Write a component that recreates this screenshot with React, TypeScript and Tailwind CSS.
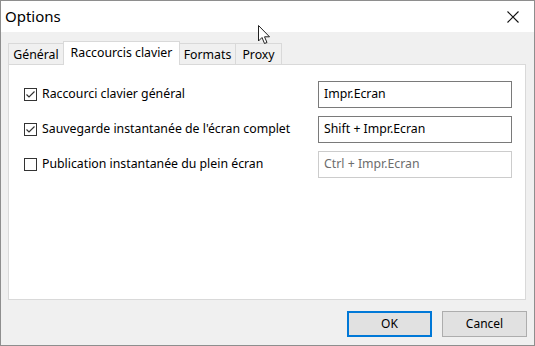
import { useState } from 'react';

const FONT = "font-['Noto_Sans','Open_Sans',sans-serif]";

function CheckBox({ checked, onClick }: { checked: boolean; onClick: () => void }) {
  return (
    <button
      type="button"
      role="checkbox"
      aria-checked={checked}
      onClick={onClick}
      className="flex h-[13px] w-[13px] shrink-0 items-center justify-center border border-[#333333] bg-white"
    >
      {checked && (
        <svg width="11" height="11" viewBox="0 0 11 11" fill="none">
          <path d="M1.5 5.5 L4 8 L9.5 2.5" stroke="#333333" strokeWidth="1.2" />
        </svg>
      )}
    </button>
  );
}

const shortcuts = [
  { label: 'Raccourci clavier général', key: 'Impr.Ecran', on: true },
  { label: "Sauvegarde instantanée de l'écran complet", key: 'Shift + Impr.Ecran', on: true },
  { label: 'Publication instantanée du plein écran', key: 'Ctrl + Impr.Ecran', on: false },
];

const tabs = [
  { name: 'Général', w: 'w-[56px]' },
  { name: 'Raccourcis clavier', w: 'w-[117px]' },
  { name: 'Formats', w: 'w-[57px]' },
  { name: 'Proxy', w: 'w-[47px]' },
];

export default function App() {
  const [checked, setChecked] = useState(shortcuts.map((s) => s.on));
  const active = 1;

  return (
    <div className={`relative flex h-[346px] w-[535px] flex-col border border-[#8e8e8e] bg-[#f0f0f0] text-[12px] text-black ${FONT}`}>
      {/* Title bar */}
      <div className="flex h-[31px] shrink-0 items-center justify-between bg-white pl-[4px] pr-[15px]">
        <span className="text-[15px] leading-none">Options</span>
        <svg width="12" height="12" viewBox="0 0 12 12">
          <path d="M0.5 0.5 L11.5 11.5 M11.5 0.5 L0.5 11.5" stroke="#111" strokeWidth="1.1" />
        </svg>
      </div>

      {/* Mouse cursor */}
      <svg className="absolute left-[257px] top-[24px]" width="13" height="20" viewBox="0 0 13 20">
        <path d="M0.5 0.5 L0.5 16 L4 12.5 L6.5 18.5 L9 17.5 L6.5 11.8 L11.5 11.8 Z" fill="white" stroke="#222" strokeWidth="1" />
      </svg>

      <div className="flex flex-1 flex-col pl-[7px] pr-[8px] pt-[9px]">
        {/* Tabs */}
        <div className="flex h-[23px] items-end pl-[1px] text-[12.3px]">
          {tabs.map((t, i) =>
            i === active ? (
              <div
                key={t.name}
                className={`${t.w} relative z-10 -mb-px -ml-px flex h-[24px] items-start justify-center border border-b-0 border-[#d9d9d9] bg-white pt-[2px]`}
              >
                {t.name}
              </div>
            ) : (
              <div
                key={t.name}
                className={`${t.w} -ml-px flex h-[21px] items-center justify-center border border-b-0 border-[#d9d9d9] bg-[#f0f0f0] pt-[2px]`}
              >
                {t.name}
              </div>
            ),
          )}
        </div>

        {/* Panel */}
        <div className="flex h-[236px] flex-col gap-[8px] border border-[#d9d9d9] bg-white pl-[15px] pr-[13px] pt-[16px] text-[12.3px]">
          {shortcuts.map((s, i) => (
            <div key={s.label} className="flex h-[27px] items-center justify-between">
              <div className="flex items-center gap-[5px]">
                <CheckBox
                  checked={checked[i]}
                  onClick={() => setChecked((c) => c.map((v, j) => (j === i ? !v : v)))}
                />
                <span>{s.label}</span>
              </div>
              <div
                className={`flex h-[27px] w-[194px] items-center border pl-[5px] ${
                  checked[i] ? 'border-[#7a7a7a] text-black' : 'border-[#cccccc] text-[#6d6d6d]'
                }`}
              >
                {s.key}
              </div>
            </div>
          ))}
        </div>

        {/* Buttons */}
        <div className="mt-[11px] flex justify-end gap-[10px]">
          <button
            type="button"
            className="flex h-[26px] w-[85px] items-center justify-center border-2 border-[#0078d7] bg-[#e1e1e1]"
          >
            OK
          </button>
          <button
            type="button"
            className="-mr-px flex h-[26px] w-[85px] items-center justify-center border border-[#adadad] bg-[#e1e1e1]"
          >
            Cancel
          </button>
        </div>
      </div>
    </div>
  );
}
